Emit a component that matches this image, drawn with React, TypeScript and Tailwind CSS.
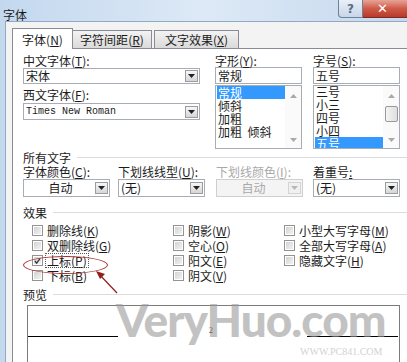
import React from "react";

function Acc({ k }: { k: string }) {
  return (
    <>
      (<span className="underline">{k}</span>)
    </>
  );
}

function DropBtn({ disabled }: { disabled?: boolean }) {
  return (
    <div
      className={`w-[13px] h-[12px] flex items-center justify-center border ${
        disabled ? "border-[#d4d4d4] bg-[#f0f0f0]" : "border-[#9c9c9c] bg-gradient-to-b from-[#f7f7f7] to-[#d6d6d6]"
      }`}
    >
      <svg width="7" height="4" viewBox="0 0 7 4">
        <path d="M0 0h7L3.5 4z" fill={disabled ? "#b8b8b8" : "#222"} />
      </svg>
    </div>
  );
}

function Select({ value, center, disabled, h = "h-[18px]", mono }: { value: string; center?: boolean; disabled?: boolean; h?: string; mono?: boolean }) {
  return (
    <div
      className={`flex items-center ${h} border pl-[2px] pr-[1px] ${
        disabled ? "border-[#cfcfcf] bg-[#f4f4f4] text-[#a9a9a9]" : "border-[#a7adb5] bg-white text-[#1b1b1b]"
      }`}
    >
      <span
        className={`flex-1 ${center ? "text-center" : ""} ${
          mono ? "font-['Liberation_Mono',monospace] text-[10px]" : ""
        }`}
      >
        {value}
      </span>
      <DropBtn disabled={disabled} />
    </div>
  );
}

function ScrollArrow({ up }: { up?: boolean }) {
  return (
    <svg width="7" height="4" viewBox="0 0 7 4">
      <path d={up ? "M0 4h7L3.5 0z" : "M0 0h7L3.5 4z"} fill="#a9a9a9" />
    </svg>
  );
}

function ListBox({ items, selected, offset, thumb }: { items: string[]; selected: number; offset: string; thumb?: boolean }) {
  return (
    <div className="mt-[1px] h-[64px] border border-[#a7adb5] bg-white flex overflow-hidden">
      <div className={`flex-1 pl-[1px] ${offset}`}>
        {items.map((it, i) => (
          <div
            key={it}
            className={`h-[13px] leading-[13px] pl-[1px] whitespace-pre ${
              i === selected ? "bg-[#3399ff] text-white" : "text-[#1b1b1b]"
            }`}
          >
            {it}
          </div>
        ))}
      </div>
      <div className="w-[16px] flex flex-col items-center pt-[8px] pb-[6px] bg-[#fafafa]">
        <ScrollArrow up />
        {thumb && (
          <div className="mt-[8px] w-[13px] h-[16px] border border-[#9a9a9a] rounded-[2px] bg-gradient-to-r from-[#f4f4f4] to-[#dedede]" />
        )}
        <div className="mt-auto">
          <ScrollArrow />
        </div>
      </div>
    </div>
  );
}

function Check({ label, k, checked }: { label: string; k: string; checked?: boolean }) {
  return (
    <div className="h-[15px] flex items-center gap-[3px]">
      <div className="w-[11px] h-[11px] border border-[#939393] bg-white p-[1px]">
        <div className="w-full h-full bg-gradient-to-br from-[#d3d3d3] to-[#f2f2f2] flex items-center justify-center">
          {checked && (
            <svg width="8" height="8" viewBox="0 0 8 8">
              <path d="M1 4l2 2.5L7 1" stroke="#333" strokeWidth="1.4" fill="none" />
            </svg>
          )}
        </div>
      </div>
      <span className={`leading-[13px] px-[1px] ${checked ? "outline outline-1 outline-dotted outline-[#555]" : ""}`}>
        {label}
        <Acc k={k} />
      </span>
    </div>
  );
}

function Section({ title }: { title: string }) {
  return (
    <div className="flex items-center gap-[6px]">
      <span className="leading-[13px]">{title}</span>
      <div className="flex-1 h-px bg-[#dcdcdc]" />
    </div>
  );
}

export default function App() {
  return (
    <div className="relative w-[407px] h-[362px] overflow-hidden bg-[#c4d8ee] flex flex-col font-['Noto_Sans_CJK_SC',sans-serif] text-[12px] text-[#1b1b1b]">
      <div className="h-[28px] flex items-start bg-gradient-to-r from-[#c3d8ef] via-[#dde9f6] to-[#c6d9ee]">
        <span className="pl-[3px] pt-[8px] leading-[13px] text-[#1b1b1b]">字体</span>
        <div className="ml-auto flex">
          <div className="w-[25px] h-[18px] border border-t-0 border-[#6e819a] rounded-bl-[4px] bg-gradient-to-b from-[#e9f0f8] to-[#c7d6e8] flex items-center justify-center text-[#5b6b80] font-['DejaVu_Sans',sans-serif] text-[12px] font-bold leading-none">
            ?
          </div>
          <div className="w-[44px] h-[18px] border-b border-[#7c2a22] bg-gradient-to-b from-[#e6a397] via-[#cf5a48] to-[#b8392a] flex items-center pl-[14px] text-white font-['DejaVu_Sans',sans-serif] text-[13px] font-bold leading-none">
            ✕
          </div>
        </div>
      </div>

      <div className="flex-1 ml-[5px] border-l border-t border-[#93a8c2] bg-[#f3f3f3] pl-[6px] pt-[6px]">
        <div className="flex items-end h-[20px]">
          <div className="relative z-10 -mb-px w-[61px] h-[21px] border-l border-t border-r border-[#898c95] bg-white flex items-center justify-center leading-[13px]">
            字体<Acc k="N" />
          </div>
          <div className="w-[79px] h-[18px] border-t border-r border-[#898c95] bg-gradient-to-b from-[#f3f3f3] to-[#dadada] flex items-center justify-center leading-[13px]">
            字符间距<Acc k="R" />
          </div>
          <div className="ml-[2px] w-[85px] h-[18px] border-t border-l border-r border-[#898c95] bg-gradient-to-b from-[#f3f3f3] to-[#dadada] flex items-center justify-center leading-[13px]">
            文字效果<Acc k="X" />
          </div>
        </div>

        <div className="w-[400px] h-[320px] border-l border-t border-[#898c95] bg-white pl-[10px] pt-[5px]">
          <div className="flex">
            <div className="w-[177px]">
              <div className="leading-[13px]">
                中文字体<Acc k="T" />:
              </div>
              <div className="mt-[1px]">
                <Select value="宋体" h="h-[16px]" />
              </div>
              <div className="mt-[4px] leading-[13px]">
                西文字体<Acc k="F" />:
              </div>
              <div className="mt-[2px]">
                <Select value="Times New Roman" h="h-[17px]" mono />
              </div>
            </div>
            <div className="ml-[15px] w-[87px]">
              <div className="leading-[13px]">
                字形<Acc k="Y" />:
              </div>
              <div className="h-[17px] border border-[#a7adb5] bg-white pl-[2px] leading-[15px]">常规</div>
              <ListBox items={["常规", "倾斜", "加粗", "加粗  倾斜"]} selected={0} offset="pt-0" />
            </div>
            <div className="ml-[11px] w-[87px]">
              <div className="leading-[13px]">
                字号<Acc k="S" />:
              </div>
              <div className="h-[17px] border border-[#a7adb5] bg-white pl-[2px] leading-[15px]">五号</div>
              <ListBox items={["三号", "小三", "四号", "小四", "五号"]} selected={4} offset="-mt-[1px]" thumb />
            </div>
          </div>

          <div className="mt-[2px]">
            <Section title="所有文字" />
          </div>
          <div className="mt-[1px] flex leading-[13px]">
            <div className="w-[95px]">
              字体颜色<Acc k="C" />:
            </div>
            <div className="w-[98px]">
              下划线线型<Acc k="U" />:
            </div>
            <div className="w-[97px] text-[#a9a9a9]">
              下划线颜色<Acc k="I" />:
            </div>
            <div>
              着重号<span className="underline">:</span>
            </div>
          </div>
          <div className="mt-[1px] flex">
            <div className="w-[87px]">
              <Select value="自动" center />
            </div>
            <div className="ml-[8px] w-[87px]">
              <Select value="(无)" />
            </div>
            <div className="ml-[11px] w-[87px]">
              <Select value="自动" center disabled />
            </div>
            <div className="ml-[10px] w-[87px]">
              <Select value="(无)" />
            </div>
          </div>

          <div className="mt-[9px]">
            <Section title="效果" />
          </div>
          <div className="mt-[4px] flex pl-[9px]">
            <div className="w-[141px]">
              <Check label="删除线" k="K" />
              <Check label="双删除线" k="G" />
              <Check label="上标" k="P" checked />
              <Check label="下标" k="B" />
            </div>
            <div className="w-[111px]">
              <Check label="阴影" k="W" />
              <Check label="空心" k="O" />
              <Check label="阳文" k="E" />
              <Check label="阴文" k="V" />
            </div>
            <div>
              <Check label="小型大写字母" k="M" />
              <Check label="全部大写字母" k="A" />
              <Check label="隐藏文字" k="H" />
            </div>
          </div>

          <div className="mt-[5px]">
            <Section title="预览" />
          </div>
          <div className="mt-[4px] ml-[4px] w-[373px] h-[60px] border border-[#7b7b7b] bg-white flex items-start">
            <div className="mt-[30px] w-[90px] h-px bg-black" />
            <span className="ml-[91px] mt-[21px] text-[8px] leading-none font-['Liberation_Serif',serif]">2</span>
            <div className="ml-auto mr-px mt-[30px] w-[91px] h-px bg-black" />
          </div>
        </div>
      </div>

      <div className="absolute left-[116px] top-[297px] text-[46px] leading-none font-['Lato',sans-serif] font-black text-[#9a9a9a] opacity-60 tracking-[-1px]">
        VeryHuo.com
      </div>
      <div className="absolute left-[300px] top-[347px] text-[10px] leading-none font-['Liberation_Serif',serif] text-[#d2d2d2]">
        WWW.PC841.COM
      </div>
      <div className="absolute left-[23px] top-[256px] w-[85px] h-[18px] rounded-[50%] border-[1.5px] border-[#a8332f]" />
      <svg className="absolute left-[90px] top-[266px]" width="32" height="32" viewBox="0 0 32 32">
        <path d="M27 27L9 8" stroke="#8f1f1b" strokeWidth="1.2" />
        <path d="M6 5l9 3-5 5z" fill="#8f1f1b" />
      </svg>
    </div>
  );
}
